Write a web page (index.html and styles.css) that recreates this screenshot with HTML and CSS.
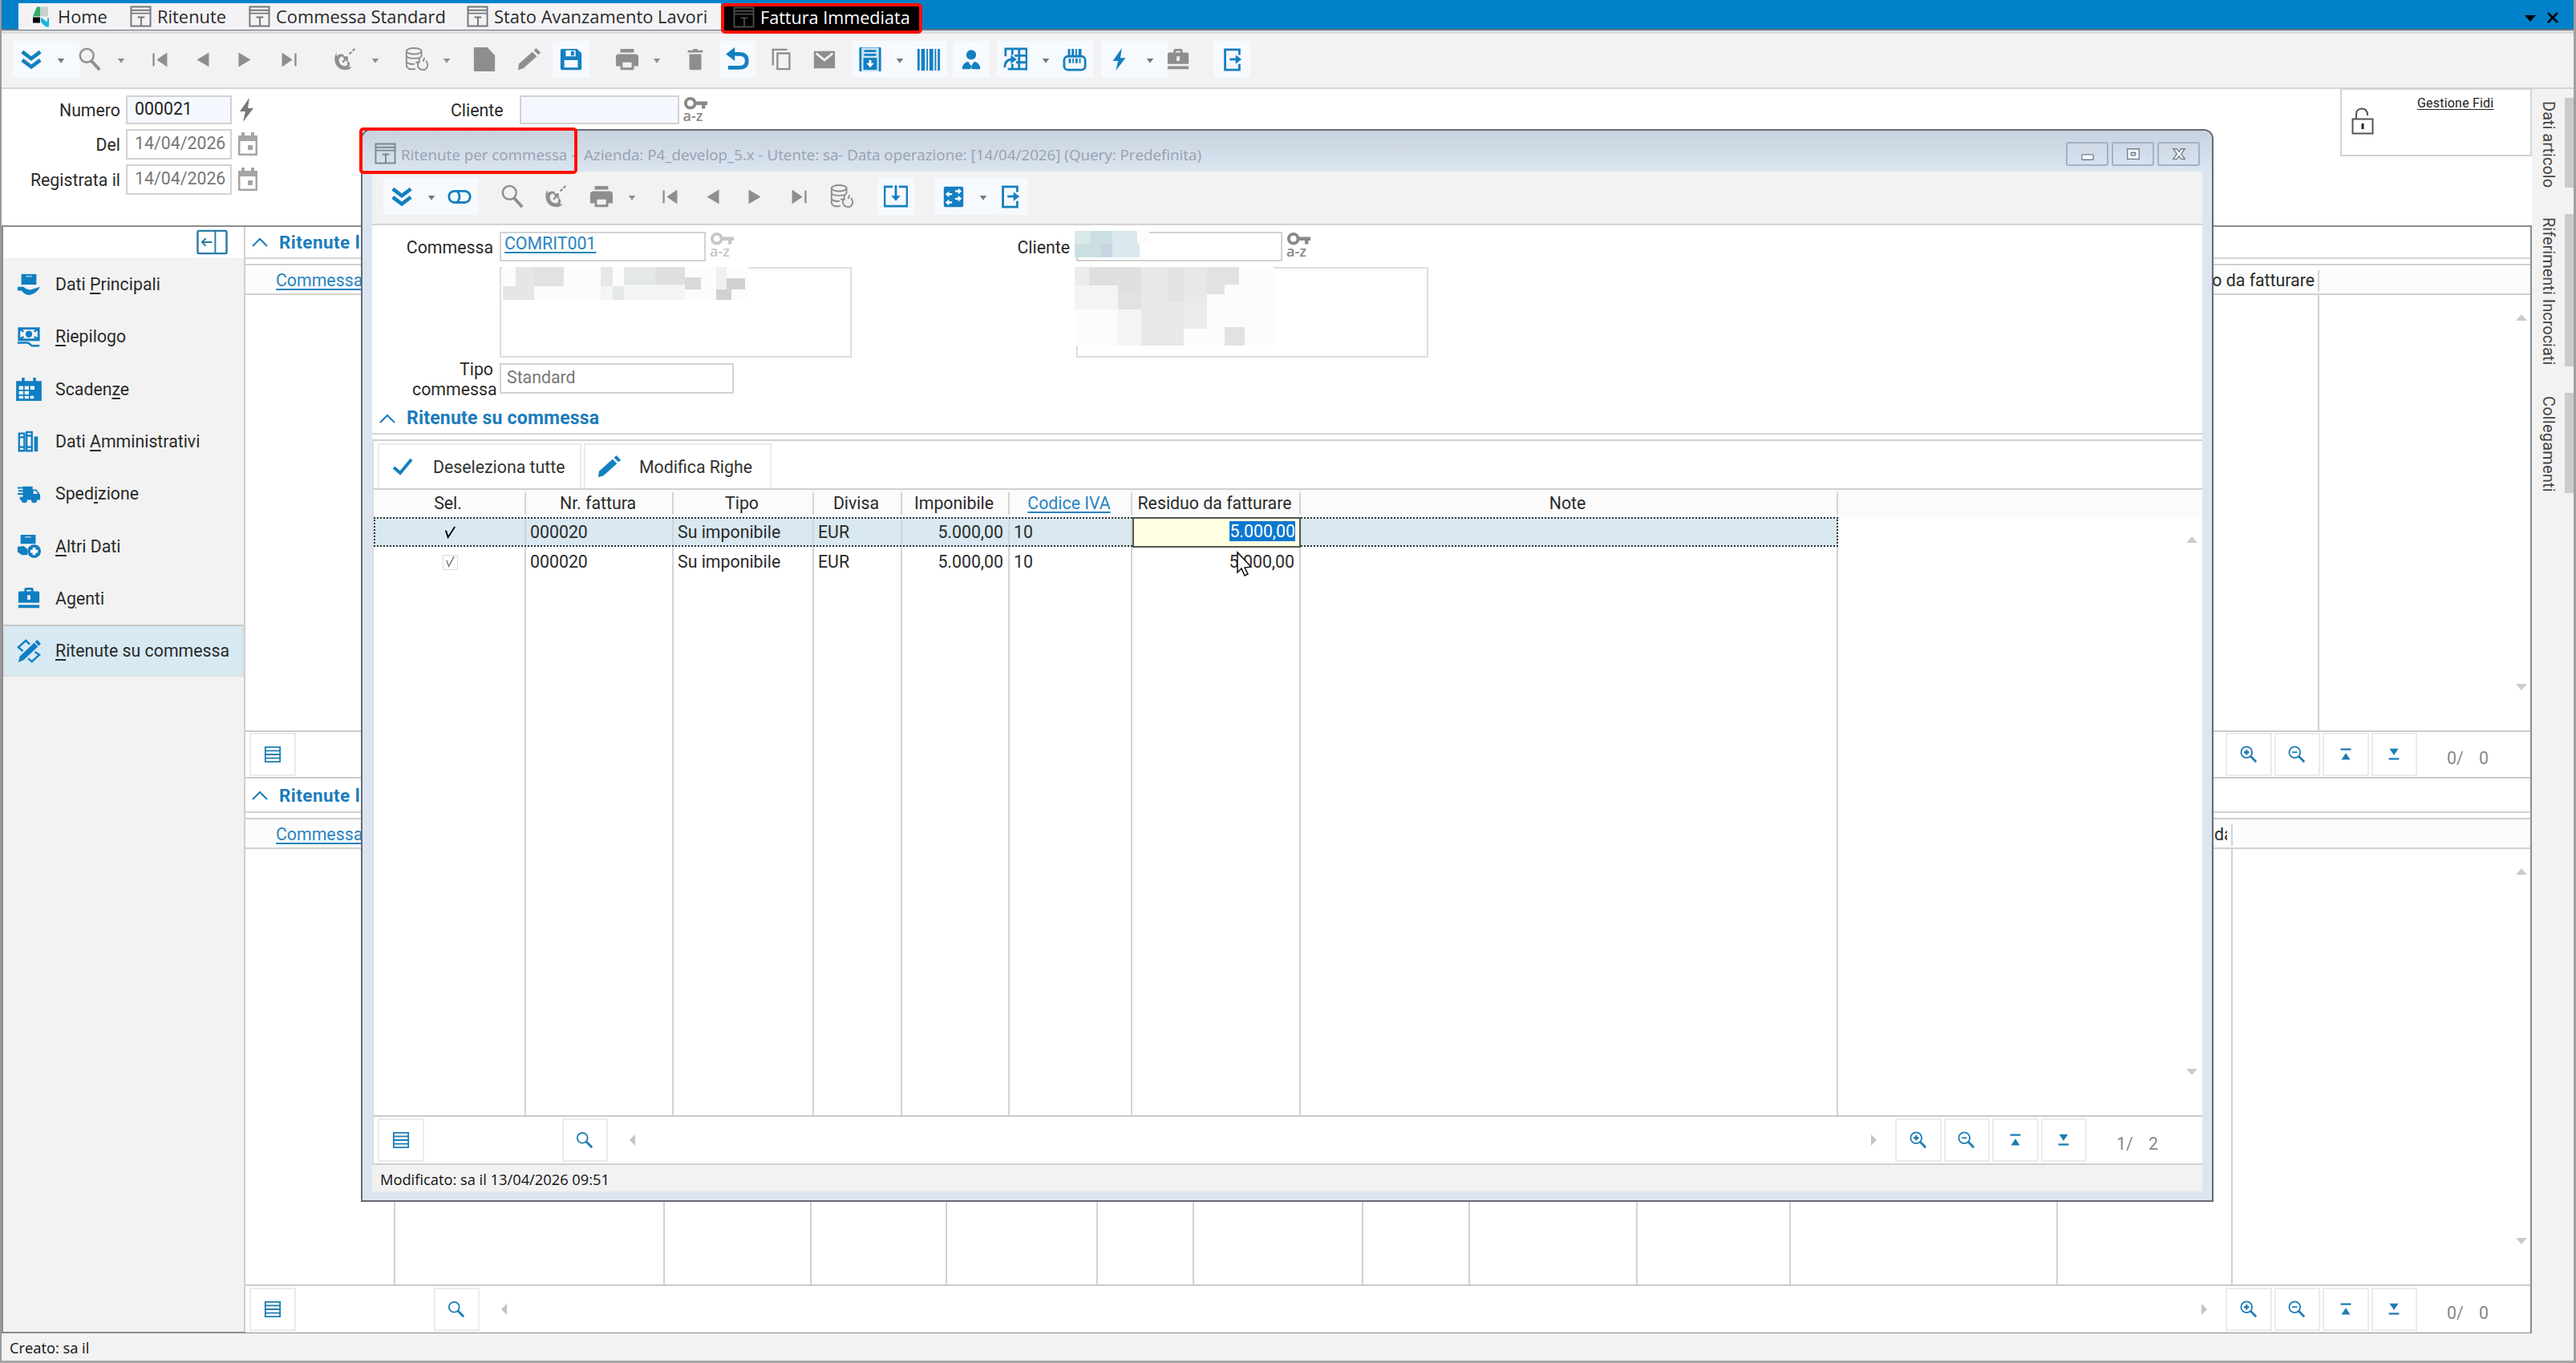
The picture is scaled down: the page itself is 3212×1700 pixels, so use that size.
FILE: index.html
```html
<!DOCTYPE html>
<html lang="it">
<head>
    <meta charset="UTF-8">
    <title>Fattura Immediata</title>
    <link rel="stylesheet" href="styles.css">
</head>
<body>
    <svg class="symbols">
        <symbol id="i-chevrons" viewBox="0 0 32 32"><path d="M4 6l12 9 12-9M4 17l12 9 12-9" fill="none" stroke="currentColor" stroke-width="5"/></symbol>
        <symbol id="i-caret" viewBox="0 0 32 32"><path d="M11.500 15h9l-4.500 6z" fill="currentColor"/></symbol>
        <symbol id="i-search" viewBox="0 0 32 32"><circle cx="12" cy="11" r="9" fill="none" stroke="currentColor" stroke-width="2.600"/><path d="M18 18l11 12" stroke="currentColor" stroke-width="4"/></symbol>
        <symbol id="i-first" viewBox="0 0 32 32"><path d="M7 8v17" stroke="currentColor" stroke-width="2.500"/><path d="M25 7v19L11 16.500z" fill="currentColor"/></symbol>
        <symbol id="i-prev" viewBox="0 0 32 32"><path d="M24 7v19L8 16.500z" fill="currentColor"/></symbol>
        <symbol id="i-next" viewBox="0 0 32 32"><path d="M8 7v19l16-9.500z" fill="currentColor"/></symbol>
        <symbol id="i-last" viewBox="0 0 32 32"><path d="M25 8v17" stroke="currentColor" stroke-width="2.500"/><path d="M7 7v19l14-9.500z" fill="currentColor"/></symbol>
        <symbol id="i-dish" viewBox="0 0 32 32"><path d="M5 7c-6 9-1 23 11 23 4 0 7-1 9-4l-4 0c2-2 2-5 0-8l-2 3c1 2 0 4-3 4-5 0-8-4-8-9 1-3 3-4 6-4l1-2c-4-2-8-1-10 2z" fill="currentColor"/><path d="M13 20l6-7" stroke="currentColor" stroke-width="2.500"/><path d="M12 12h8v8z" fill="currentColor"/><path d="M22 9l8-8" stroke="currentColor" stroke-width="2.500" stroke-dasharray="4 2"/></symbol>
        <symbol id="i-db" viewBox="0 0 32 32"><g fill="none" stroke="currentColor" stroke-width="2"><ellipse cx="13" cy="5" rx="10" ry="4"/><path d="M3 5v6c0 5 20 5 20 0V5M3 11v7c0 4 7 5 11 4M3 18v6c0 4 5 6 12 5M6 29h9"/><path d="M20 18c-5 8 1 12 5 12s9-5 4-12M20 14v6h-5M27 14l-2 5"/></g></symbol>
        <symbol id="i-file" viewBox="0 0 32 32"><path d="M2-1h17l11 12v19q0 3-3 3H5q-3 0-3-3z" fill="currentColor"/></symbol>
        <symbol id="i-pencil" viewBox="0 0 32 32"><path d="M1 30l1-8L20 6l6 6L8 28zM22 4l3-3 6 6-3 3z" fill="currentColor"/></symbol>
        <symbol id="i-save" viewBox="0 0 32 32"><path fill-rule="evenodd" d="M4 2h20l6 6v20q0 2-2 2H4q-2 0-2-2V4q0-2 2-2zM9 4v8h13V4zM7 17v10h18V17zM16 5h4v6h-4z" fill="currentColor"/></symbol>
        <symbol id="i-print" viewBox="0 0 32 32"><path fill-rule="evenodd" d="M7 2h18v5H7zM5 9h22q4 0 4 4v12h-6v5H7v-5H1V13q0-4 4-4zM10 20v7h12v-7z" fill="currentColor"/></symbol>
        <symbol id="i-trash" viewBox="0 0 32 32"><path d="M6 4h7V2h6v2h7v3H6zM8 9h16v19q0 2-2 2H10q-2 0-2-2z" fill="currentColor"/></symbol>
        <symbol id="i-undo" viewBox="0 0 32 32"><path d="M9 9h9q10 0 10 9t-10 9H3" fill="none" stroke="currentColor" stroke-width="5"/><path d="M0 9l12-9v18z" fill="currentColor"/></symbol>
        <symbol id="i-copy" viewBox="0 0 32 32"><path d="M4 24V3h19M10 8h16v21H10z" fill="none" stroke="currentColor" stroke-width="2.500"/></symbol>
        <symbol id="i-mail" viewBox="0 0 32 32"><path d="M2 5h28v23H2z" fill="currentColor"/><path d="M5 8l11 9 11-9" fill="none" stroke="#f2f2f2" stroke-width="3"/></symbol>
        <symbol id="i-doc" viewBox="0 0 32 32"><rect x="3" y="-1" width="26" height="35" rx="3" fill="#cfe4f3" stroke="currentColor" stroke-width="3"/><path d="M8 5h16M8 10h16" stroke="currentColor" stroke-width="3"/><path d="M7 14h18v16H7z" fill="currentColor"/><path d="M16 17v6" stroke="#fff" stroke-width="3"/><path d="M11 21h10l-5 6z" fill="#fff"/></symbol>
        <symbol id="i-barcode" viewBox="0 0 32 32"><path d="M1 2h3v29H1zM6 2h5v29H6zM13 2h2v29h-2zM17 2h5v29h-5zM24 2h2v29h-2zM28 2h3v29h-3z" fill="currentColor"/></symbol>
        <symbol id="i-person" viewBox="0 0 32 32"><circle cx="16" cy="10" r="6.500" fill="currentColor"/><path d="M4 29q0-8 8-10l4 6 4-6q8 2 8 10H17l-1-3-1 3z" fill="currentColor"/></symbol>
        <symbol id="i-grid" viewBox="0 0 32 32"><path d="M3 12V2h28v27H6M12 2v8M21 2v27M31 11H15M31 20H17M12 22v7" fill="none" stroke="currentColor" stroke-width="3"/><path d="M2 27q0-11 10-11" fill="none" stroke="currentColor" stroke-width="3"/><path d="M10 10l8 6-8 6z" fill="currentColor"/></symbol>
        <symbol id="i-box" viewBox="0 0 32 32"><rect x="2" y="12" width="28" height="18" rx="5" fill="none" stroke="currentColor" stroke-width="3"/><path d="M7 11V2h3v9zM12 11V2h3v9zM17 11V2h2v9zM21 11V2h4v9zM8 15h3v6H8zM13 15h2v6h-2zM17 15h3v6h-3zM22 15h2v6h-2z" fill="currentColor"/></symbol>
        <symbol id="i-bolt" viewBox="0 0 32 32"><path d="M19 1L7 18h7l-3 13 13-17h-7z" fill="currentColor"/></symbol>
        <symbol id="i-case" viewBox="0 0 32 32"><path fill-rule="evenodd" d="M10 7V4q0-2 2-2h8q2 0 2 2v3h6q2 0 2 2v13H2V9q0-2 2-2zM13 5v2h6V5zM2 25h28v4H2zM14 12v6h4v-6z" fill="currentColor"/></symbol>
        <symbol id="i-exit" viewBox="0 0 32 32"><path d="M26 10V3H7v27h19v-8" fill="none" stroke="currentColor" stroke-width="3"/><path d="M13 16h9" stroke="currentColor" stroke-width="3"/><path d="M21 10l8 6-8 6z" fill="currentColor"/></symbol>
        <symbol id="i-toggle" viewBox="0 0 32 32"><rect x="2" y="9" width="28" height="15" rx="7" fill="none" stroke="currentColor" stroke-width="3"/><path d="M13 9q6 7 0 15" fill="none" stroke="currentColor" stroke-width="3"/></symbol>
        <symbol id="i-import" viewBox="0 0 32 32"><path d="M12 3H1v26h30V3H20" fill="none" stroke="currentColor" stroke-width="3"/><path d="M16 1v16" stroke="currentColor" stroke-width="3"/><path d="M10 15h12l-6 7z" fill="currentColor"/></symbol>
        <symbol id="i-calc" viewBox="0 0 32 32"><rect x="3" y="3" width="26" height="27" rx="2" fill="currentColor"/><path d="M18 9h5M9 13h5M18 19h5M9 24h5" stroke="#fff" stroke-width="2.500"/><path d="M22 5l5 4-5 4zM10 9l-5 4 5 4zM22 15l5 4-5 4zM10 20l-5 4 5 4z" fill="#fff"/></symbol>
        <symbol id="i-form" viewBox="0 0 28 28"><path d="M1.500 1.500h25v25h-25zM1.500 6h25M1.500 10h25M10 15h9M14.500 15v11" fill="none" stroke="currentColor" stroke-width="2"/></symbol>
        <symbol id="i-key" viewBox="0 0 32 32"><circle cx="9" cy="9" r="6" fill="none" stroke="currentColor" stroke-width="4"/><path d="M15 9h16M26 10v6" stroke="currentColor" stroke-width="4.500"/></symbol>
        <symbol id="i-cal" viewBox="0 0 26 32"><path fill-rule="evenodd" d="M1 5h4V1h4v4h8V1h4v4h4v25H1zM3.500 12v15.500h19V12z" fill="currentColor"/><path d="M13 17h6v6h-6z" fill="currentColor"/></symbol>
        <symbol id="i-up" viewBox="0 0 20 12"><path d="M1 11l9-9 9 9" fill="none" stroke="currentColor" stroke-width="2"/></symbol>
        <symbol id="i-list" viewBox="0 0 24 24"><path d="M2 2h20v20H2zM2 7h20M2 12h20M2 17h20" fill="none" stroke="currentColor" stroke-width="2"/></symbol>
        <symbol id="i-lens" viewBox="0 0 24 24"><circle cx="9" cy="9" r="7" fill="none" stroke="currentColor" stroke-width="2"/><path d="M14 14l8 8" stroke="currentColor" stroke-width="3"/></symbol>
        <symbol id="i-zoomin" viewBox="0 0 24 24"><circle cx="9" cy="9" r="7.500" fill="none" stroke="currentColor" stroke-width="2"/><path d="M14 14l8 8" stroke="currentColor" stroke-width="3"/><path d="M9 5.500v7M5.500 9h7" stroke="currentColor" stroke-width="2.500"/></symbol>
        <symbol id="i-zoomout" viewBox="0 0 24 24"><circle cx="9" cy="9" r="7.500" fill="none" stroke="currentColor" stroke-width="2"/><path d="M14 14l8 8" stroke="currentColor" stroke-width="3"/><path d="M5.500 9h7" stroke="currentColor" stroke-width="2"/></symbol>
        <symbol id="i-top" viewBox="0 0 24 24"><path d="M5 5h14" stroke="currentColor" stroke-width="2.500"/><path d="M6 19h12l-6-9z" fill="currentColor"/></symbol>
        <symbol id="i-bottom" viewBox="0 0 24 24"><path d="M5 18h14" stroke="currentColor" stroke-width="2.500"/><path d="M6 4h12l-6 9z" fill="currentColor"/></symbol>
    </svg>

    <nav class="tabs">
        <div class="tab"><svg class="logo" viewBox="0 0 24 26"><path d="M2 13L7 1h4v12z" fill="#2fae6b"/><path d="M11 1h10v12H11z" fill="#c9cfcc"/><path d="M2 14h9v7H2z" fill="#000"/><path d="M12 14l8 6v-5h2v11h-4l-6-6z" fill="#16b4e0"/></svg>Home</div>
        <div class="tab"><svg><use href="#i-form"/></svg>Ritenute</div>
        <div class="tab"><svg><use href="#i-form"/></svg>Commessa Standard</div>
        <div class="tab"><svg><use href="#i-form"/></svg>Stato Avanzamento Lavori</div>
        <div class="tab active"><svg><use href="#i-form"/></svg>Fattura Immediata</div>
        <div class="tabs-end"><svg viewBox="0 0 14 10"><path d="M0 1h14L7 9z"/></svg><svg class="close" viewBox="0 0 14 14"><path d="M1 1l12 12M13 1L1 13" stroke="#000" stroke-width="2.500"/></svg></div>
    </nav>

    <div class="toolbar main-tools">
        <svg class="on"><use href="#i-chevrons"/></svg>
        <svg class="arrow on"><use href="#i-caret"/></svg>
        <svg><use href="#i-search"/></svg>
        <svg><use href="#i-caret"/></svg>
        <svg><use href="#i-first"/></svg>
        <svg><use href="#i-prev"/></svg>
        <svg><use href="#i-next"/></svg>
        <svg><use href="#i-last"/></svg>
        <svg><use href="#i-dish"/></svg>
        <svg><use href="#i-caret"/></svg>
        <svg><use href="#i-db"/></svg>
        <svg><use href="#i-caret"/></svg>
        <svg><use href="#i-file"/></svg>
        <svg><use href="#i-pencil"/></svg>
        <svg class="on"><use href="#i-save"/></svg>
        <svg><use href="#i-print"/></svg>
        <svg><use href="#i-caret"/></svg>
        <svg><use href="#i-trash"/></svg>
        <svg class="on"><use href="#i-undo"/></svg>
        <svg><use href="#i-copy"/></svg>
        <svg><use href="#i-mail"/></svg>
        <svg class="on"><use href="#i-doc"/></svg>
        <svg class="arrow on"><use href="#i-caret"/></svg>
        <svg class="on"><use href="#i-barcode"/></svg>
        <svg class="on"><use href="#i-person"/></svg>
        <svg class="on"><use href="#i-grid"/></svg>
        <svg class="arrow on"><use href="#i-caret"/></svg>
        <svg class="on"><use href="#i-box"/></svg>
        <svg class="on"><use href="#i-bolt"/></svg>
        <svg class="arrow on"><use href="#i-caret"/></svg>
        <svg><use href="#i-case"/></svg>
        <svg class="on"><use href="#i-exit"/></svg>
    </div>

    <div class="work">
        <main class="document">
            <section class="head">
                <div class="head-fields">
                    <label>Numero</label><div class="field dark">000021</div><svg class="bolt"><use href="#i-bolt"/></svg>
                    <label>Del</label><div class="field">14/04/2026</div><svg><use href="#i-cal"/></svg>
                    <label>Registrata il</label><div class="field">14/04/2026</div><svg><use href="#i-cal"/></svg>
                </div>
                <div class="head-client">
                    <label>Cliente</label><div class="field dark"></div>
                    <div class="key"><svg><use href="#i-key"/></svg><span>a-z</span></div>
                </div>
                <div class="fidi">
                    <svg viewBox="0 0 28 34"><path d="M1.500 14.500h25v18h-25zM6 14V8q0-6 7-6.500 6 0 7 6.500v2" fill="none" stroke="#555" stroke-width="2"/><path d="M14 20v7" stroke="#222" stroke-width="3"/></svg>
                    <a>Gestione Fidi</a>
                </div>
            </section>

            <div class="panels">
                <aside class="menu">
                    <div class="menu-top"><svg viewBox="0 0 40 32"><rect x="1.500" y="1.500" width="37" height="29" rx="2" fill="#fff" stroke="currentColor" stroke-width="2.500"/><path d="M24 2v28M7 16h13M12 11l-5 5 5 5" fill="none" stroke="currentColor" stroke-width="2"/></svg></div>
                    <div class="item"><svg viewBox="0 0 32 32"><path d="M6 2h20v14H6z" fill="currentColor"/><path d="M12 5h8" stroke="#8cc4e6" stroke-width="2"/><path d="M1 19h8q4 4 9 4l13-4q-4 7-9 9-7 4-13-1l-3-3H1z" fill="currentColor"/></svg><span>Dati <u>P</u>rincipali</span></div>
                    <div class="item"><svg viewBox="0 0 32 32"><path d="M3 5h26v15H3z" fill="none" stroke="currentColor" stroke-width="3"/><circle cx="16" cy="12.500" r="4.500" fill="currentColor"/><path d="M4 6l5 3M28 6l-5 3M4 19l5-3M28 19l-5-3M1 24h14l5 4h10" stroke="currentColor" stroke-width="2.500" fill="none"/></svg><span><u>R</u>iepilogo</span></div>
                    <div class="item"><svg class="wide" viewBox="0 0 36 34"><path fill-rule="evenodd" d="M0 6h8V1h4v5h12V1h4v5h8v28H0zM4 13v5h6v-5zM12 13v5h6v-5zM20 13v5h6v-5zM4 20v5h6v-5zM12 20v5h6v-5zM4 27v4h6v-4zM12 27v4h6v-4zM20 27v4h5v-4z" fill="currentColor"/></svg><span>Scaden<u>z</u>e</span></div>
                    <div class="item"><svg viewBox="0 0 32 32"><path d="M3 5h7v23H3zM13 3h7v25h-7zM3 10h7M13 8h7M3 23h7M13 23h7" fill="none" stroke="currentColor" stroke-width="2.500"/><path d="M23 9h5v20h-5z" fill="currentColor"/></svg><span>Dati <u>A</u>mministrativi</span></div>
                    <div class="item"><svg viewBox="0 0 32 32"><path d="M8 6h13v4h5l5 7v7h-4a4 4 0 01-8 0h-5a4 4 0 01-8 0H4v-4h4z" fill="currentColor"/><path d="M1 8h8M2 12h8M1 16h8" stroke="currentColor" stroke-width="2"/><path d="M22 12h3l3 4h-6z" fill="#f2f2f2"/></svg><span>Sped<u>i</u>zione</span></div>
                    <div class="item"><svg viewBox="0 0 32 32"><path d="M5 1h20v12H5zM1 17l8-1 5 4v8H7l-6-4z" fill="currentColor"/><path d="M11 4h8" stroke="#8cc4e6" stroke-width="2"/><circle cx="23" cy="23" r="9" fill="currentColor"/><path d="M23 18v10M18 23h10" stroke="#fff" stroke-width="4"/></svg><span><u>A</u>ltri Dati</span></div>
                    <div class="item"><svg><use href="#i-case"/></svg><span>A<u>g</u>enti</span></div>
                    <div class="item selected"><svg viewBox="0 0 32 32"><path d="M2 31l2-8L23 5l5 5L9 28z" fill="currentColor"/><path d="M24 4l3-3 5 5-3 3z" fill="currentColor"/><path d="M8 16l-6-5L12 2l5 5M24 17l6 4-10 9-5-4" fill="none" stroke="currentColor" stroke-width="2.500"/></svg><span><u>R</u>itenute su commessa</span></div>
                </aside>

                <div class="grids">
                    <section class="grid-box first">
                        <h2><svg><use href="#i-up"/></svg>Ritenute l</h2>
                        <div class="grid-head back-one">
                            <div><a>Commessa</a></div>
                            <div class="right">Residuo da fatturare</div>
                            <div></div>
                        </div>
                        <div class="grid-body back-one">
                            <div></div><div></div><div></div>
                            <i class="tri up"></i><i class="tri down"></i>
                        </div>
                        <footer class="grid-foot">
                            <span class="btn"><svg><use href="#i-list"/></svg></span>
                            <span class="btn push"><svg><use href="#i-zoomin"/></svg></span>
                            <span class="btn"><svg><use href="#i-zoomout"/></svg></span>
                            <span class="btn"><svg><use href="#i-top"/></svg></span>
                            <span class="btn"><svg><use href="#i-bottom"/></svg></span>
                            <span class="count"><b>0/</b><b>0</b></span>
                        </footer>
                    </section>
                    <section class="grid-box second">
                        <h2><svg><use href="#i-up"/></svg>Ritenute l</h2>
                        <div class="grid-head back-two">
                            <div><a>Commessa</a></div>
                            <div></div><div></div><div></div><div></div><div></div><div></div><div></div><div></div><div></div><div></div>
                            <div class="cut"><span>da</span></div>
                            <div></div>
                        </div>
                        <div class="grid-body back-two">
                            <div></div><div></div><div></div><div></div><div></div><div></div><div></div><div></div><div></div><div></div><div></div><div></div><div></div>
                            <i class="tri up"></i><i class="tri down"></i>
                        </div>
                        <footer class="grid-foot">
                            <span class="btn"><svg><use href="#i-list"/></svg></span>
                            <span class="btn find"><svg><use href="#i-lens"/></svg></span>
                            <i class="tri left"></i>
                            <i class="tri rightward"></i>
                            <span class="btn"><svg><use href="#i-zoomin"/></svg></span>
                            <span class="btn"><svg><use href="#i-zoomout"/></svg></span>
                            <span class="btn"><svg><use href="#i-top"/></svg></span>
                            <span class="btn"><svg><use href="#i-bottom"/></svg></span>
                            <span class="count"><b>0/</b><b>0</b></span>
                        </footer>
                    </section>
                </div>
            </div>
        </main>
        <div class="side-tabs">
            <span class="t1">Dati articolo</span>
            <span class="t2">Riferimenti Incrociati</span>
            <span class="t3">Collegamenti</span>
        </div>
    </div>
    <div class="status">Creato: sa il</div>

    <!-- finestra Ritenute per commessa -->
    <div class="dialog">
        <header class="dialog-title">
            <svg><use href="#i-form"/></svg>
            <span>Ritenute per commessa -&nbsp; Azienda: P4_develop_5.x - Utente: sa- Data operazione: [14/04/2026] (Query: Predefinita)</span>
            <div class="win-btns">
                <b><svg viewBox="0 0 20 20"><rect x="2" y="11" width="16" height="7" rx="1" fill="#fff" stroke="#6d7b8c" stroke-width="1.500"/></svg></b>
                <b><svg viewBox="0 0 20 20"><path fill-rule="evenodd" d="M2 3h16v14H2zM7 8v4h6V8z" fill="#fff" stroke="#6d7b8c" stroke-width="1.500"/></svg></b>
                <b><svg viewBox="0 0 20 20"><path d="M2 3h5l3 4 3-4h5l-5 7 5 7h-5l-3-4-3 4H2l5-7z" fill="#fff" stroke="#6d7b8c" stroke-width="1.500"/></svg></b>
            </div>
        </header>
        <div class="dialog-content">
            <div class="toolbar dialog-tools">
                <svg class="on"><use href="#i-chevrons"/></svg>
                <svg class="arrow on"><use href="#i-caret"/></svg>
                <svg class="on"><use href="#i-toggle"/></svg>
                <svg><use href="#i-search"/></svg>
                <svg><use href="#i-dish"/></svg>
                <svg><use href="#i-print"/></svg>
                <svg><use href="#i-caret"/></svg>
                <svg><use href="#i-first"/></svg>
                <svg><use href="#i-prev"/></svg>
                <svg><use href="#i-next"/></svg>
                <svg><use href="#i-last"/></svg>
                <svg><use href="#i-db"/></svg>
                <svg class="on"><use href="#i-import"/></svg>
                <svg class="on"><use href="#i-calc"/></svg>
                <svg class="arrow on"><use href="#i-caret"/></svg>
                <svg class="on"><use href="#i-exit"/></svg>
            </div>
            <div class="dialog-form">
                <div class="form-col">
                    <label>Commessa</label>
                    <div class="line"><div class="field code"><a>COMRIT001</a></div><div class="key off"><svg><use href="#i-key"/></svg><span>a-z</span></div></div>
                    <div class="area wide-area">
                        <svg class="mosaic" viewBox="0 0 306 44" shape-rendering="crispEdges">
                            <path d="M0 0h306v41H0z" fill="#fcfcfc"/>
                            <path d="M16 0h23v24H16zM0 24h39v17H0z" fill="#e6e6e4"/><path d="M39 0h37v24H39z" fill="#e2e2e1"/>
                            <path d="M122 0h15v24h-15z" fill="#e6e7e8"/><path d="M137 24h14v17h-14zM151 0h39v22h-39z" fill="#e5e8e8"/>
                            <path d="M151 22h76v19h-76zM122 24h15v17h-15z" fill="#f4f5f5"/><path d="M190 0h37v22h-37z" fill="#dfdfdf"/>
                            <path d="M227 13h20v15h-20z" fill="#d9d9da"/><path d="M266 0h13v28h-13z" fill="#f0f0f0"/><path d="M279 14h23v14h-23zM266 28h19v13h-19z" fill="#d1d1d1"/>
                        </svg>
                    </div>
                    <label class="two">Tipo commessa</label>
                    <div class="field type">Standard</div>
                </div>
                <div class="form-col client">
                    <label>Cliente</label>
                    <div class="line"><div class="field code">
                        <svg class="mosaic code-mosaic" viewBox="0 0 92 33" shape-rendering="crispEdges">
                            <path d="M0 0h20v16H0z" fill="#dae9e8"/><path d="M20 0h27v16H20zM0 16h33v17H0z" fill="#cbdfe3"/><path d="M33 16h14v17H33z" fill="#c6d5e4"/><path d="M47 0h31v16h3v17H47z" fill="#dbe8ee"/><path d="M78 0h15v16H78z" fill="#fcfcfc"/>
                        </svg>
                    </div><div class="key"><svg><use href="#i-key"/></svg><span>a-z</span></div></div>
                    <div class="area wide-area">
                        <svg class="mosaic client-mosaic" viewBox="0 0 248 98" shape-rendering="crispEdges">
                            <path d="M0 0h248v98H0z" fill="#fcfcfc"/>
                            <path d="M0 0h18v23H0zM136 45h29v32h-29z" fill="#ececed"/><path d="M0 23h54v30H0zM54 53h29v45H54z" fill="#f4f4f4"/>
                            <path d="M18 0h65v30H54v-7H18z" fill="#e0dee1"/><path d="M54 30h29v23H54z" fill="#e1e3e0"/>
                            <path d="M83 0h33v22h20V0h29v45h-29v53H83z" fill="#e7e9e8"/><path d="M116 0h20v44h-20z" fill="#e4e3e4"/>
                            <path d="M165 0h40v22h-18v12h-22zM187 75h25v23h-25z" fill="#e2e2e2"/>
                        </svg>
                    </div>
                </div>
            </div>
            <h2><svg><use href="#i-up"/></svg>Ritenute su commessa</h2>
            <section class="rows-box">
                <div class="actions">
                    <button class="deselect"><svg viewBox="0 0 26 22"><path d="M2 12l8 7L24 2" fill="none" stroke="currentColor" stroke-width="4"/></svg>Deseleziona tutte</button>
                    <button class="edit"><svg viewBox="0 0 32 32"><use href="#i-pencil"/></svg>Modifica Righe</button>
                </div>
                <div class="rows head-row">
                    <div>Sel.</div><div>Nr. fattura</div><div>Tipo</div><div>Divisa</div><div>Imponibile</div><div><a>Codice IVA</a></div><div>Residuo da fatturare</div><div>Note</div>
                </div>
                <div class="rows-area">
                    <div class="rows data current">
                        <div class="check"><svg viewBox="0 0 18 18"><path d="M3 6l3 9L15 1" fill="none" stroke="#000" stroke-width="2"/></svg></div><div>000020</div><div>Su imponibile</div><div>EUR</div><div class="num">5.000,00</div><div>10</div><div class="num editing"><mark>5.000,00</mark></div><div></div>
                    </div>
                    <div class="rows data">
                        <div class="check"><svg class="boxed" viewBox="0 0 18 18"><path d="M4 6l3 8L14 1" fill="none" stroke="#777" stroke-width="1.500"/></svg></div><div>000020</div><div>Su imponibile</div><div>EUR</div><div class="num">5.000,00</div><div>10</div><div class="num">5.000,00</div><div></div>
                    </div>
                    <div class="rows blank"><div></div><div></div><div></div><div></div><div></div><div></div><div></div><div></div></div>
                    <i class="tri up"></i><i class="tri down"></i>
                    <svg class="pointer" viewBox="0 0 20 32"><path d="M1 1v25l5-5 4 9 4-2-4-8 8-1z" fill="#fff" stroke="#111" stroke-width="1.500"/></svg>
                </div>
                <footer class="grid-foot">
                    <span class="btn"><svg><use href="#i-list"/></svg></span>
                    <span class="btn find"><svg><use href="#i-lens"/></svg></span>
                    <i class="tri left"></i>
                    <i class="tri rightward"></i>
                    <span class="btn"><svg><use href="#i-zoomin"/></svg></span>
                    <span class="btn"><svg><use href="#i-zoomout"/></svg></span>
                    <span class="btn"><svg><use href="#i-top"/></svg></span>
                    <span class="btn"><svg><use href="#i-bottom"/></svg></span>
                    <span class="count"><b>1/</b><b>2</b></span>
                </footer>
            </section>
            <div class="dialog-status">Modificato: sa il 13/04/2026 09:51</div>
        </div>
        <div class="highlight"></div>
    </div>
</body>
</html>
```
FILE: styles.css
```css
* {
    box-sizing: border-box;
}
body {
    margin: 0;
    width: 3212px;
    height: 1700px;
    overflow: hidden;
    position: relative;
    display: flex;
    flex-direction: column;
    background: #f2f2f2;
    border-left: 2px solid #9a9a9a;
    border-right: 3px solid #a0a0a0;
    border-bottom: 3px solid #a6a6a6;
    color: #2a2a2a;
    font-family: Roboto, 'Liberation Sans', sans-serif;
    font-size: 21.3px;
}
.symbols {
    position: absolute;
    width: 0;
    height: 0;
}
svg {
    display: block;
    flex: none;
    overflow: visible;
}
a {
    color: #2a84c0;
    text-decoration: underline;
    text-underline-offset: 3px;
}

/* schede */
.tabs {
    height: 42px;
    flex: none;
    padding: 4px 19px 0 21px;
    display: grid;
    grid-template-columns: 139px 148px 272px 317px 251px 1fr;
    background: #0081c9;
    border-bottom: 4px solid #dcdcdf;
    box-shadow: inset 0 -2px #6b7680;
    font-family: 'Open Sans', 'Noto Sans', sans-serif;
    font-size: 21.9px;
}
.tab {
    height: 33px;
    display: flex;
    align-items: center;
    gap: 7px;
    background: #f3f3f5;
    white-space: nowrap;
}
.tab:first-child {
    padding-left: 16px;
    gap: 9px;
}
.tab svg {
    width: 27px;
    height: 27px;
    color: #777;
}
.tab .logo {
    width: 24px;
}
.tab.active {
    height: 38px;
    padding: 0 0 3px 11px;
    position: relative;
    background: #000;
    color: #fff;
    border: 4px solid #ff1000;
    border-radius: 5px;
    font-size: 21.6px;
}
.tab.active svg {
    color: #4a4a4a;
}
.tabs-end {
    display: flex;
    justify-content: flex-end;
    align-items: center;
    gap: 14px;
}
.tabs-end svg {
    width: 14px;
    height: 10px;
}
.tabs-end .close {
    height: 14px;
    margin-top: -2px;
}

/* barre strumenti */
.toolbar {
    flex: none;
    display: grid;
    align-items: center;
    color: #8e8e8e;
    background: #f2f2f2;
    border-bottom: 2px solid #d4d4d4;
}
.toolbar svg {
    width: 30px;
    height: 30px;
}
.toolbar .on {
    color: #1480c0;
    background: #f6f9fe;
    box-shadow: 0 0 0 8px #f6f9fe;
}
.toolbar .arrow {
    color: #777;
}
.main-tools {
    height: 69px;
    padding-left: 22px;
    padding-bottom: 3px;
    grid-template-columns: 37px 36px 39px 49px 53px 52px 55px 70px 38px 51px 38px 47px 56px 52px 70px 37px 48px 53px 55px 53px 57px 37px 36px 53px 55px 38px 36px 56px 38px 35px 67px 32px;
}
.dialog-tools {
    height: 67px;
    padding-left: 22px;
    padding-bottom: 4px;
    grid-template-columns: 37px 35px 66px 54px 57px 38px 48px 53px 52px 55px 53px 68px 72px 37px 33px 32px;
}

.work {
    height: 1552px;
    flex: none;
    display: flex;
}
.document {
    flex: 1;
    background: #fff;
}
.side-tabs {
    width: 52px;
    padding-top: 11px;
    display: flex;
    flex-direction: column;
    background: #f2f2f2;
}
.side-tabs span {
    writing-mode: vertical-rl;
    width: 52px;
    padding-right: 5px;
    padding-top: 4px;
    line-height: 30px;
    font-size: 20px;
    color: #444;
    border-right: 11px solid #cbcbcb;
    margin-bottom: 33px;
    white-space: nowrap;
}
.side-tabs .t1 {
    height: 112px;
}
.side-tabs .t2 {
    height: 190px;
}
.side-tabs .t3 {
    height: 125px;
    letter-spacing: 0.200px;
}

/* testata documento */
.head {
    height: 170px;
    display: flex;
    padding-top: 8px;
}
.head-fields {
    width: 322px;
    display: grid;
    grid-template-columns: 148px 132px 26px;
    grid-auto-rows: 36px 38px 38px;
    row-gap: 6px;
    column-gap: 7px;
    align-items: center;
    align-content: start;
}
.head-fields label {
    text-align: right;
}
.head-fields svg {
    width: 26px;
    height: 32px;
    color: #a5a5a5;
}
.head-fields .bolt {
    width: 32px;
    margin-left: -4px;
    color: #777;
}
.field {
    height: 100%;
    display: flex;
    align-items: center;
    padding: 0 0 3px 9px;
    background: #fff;
    border: 2px solid #d2d2d2;
    color: #777;
    position: relative;
}
.field.dark {
    background: #f5f8fe;
    color: #222;
}
.head-client {
    height: 36px;
    margin-left: 238px;
    display: flex;
    align-items: center;
}
.head-client .field {
    width: 199px;
    margin: 0 5px 0 20px;
}
.key {
    width: 31px;
    height: 34px;
    color: #888;
    font: 600 18px/12px 'Open Sans', sans-serif;
}
.key svg {
    width: 31px;
    height: 31px;
    margin-bottom: -13px;
}
.key.off {
    color: #c6c6c6;
}
.fidi {
    width: 239px;
    height: 85px;
    margin: -9px 0 0 auto;
    display: flex;
    border: 2px solid #d4d4d4;
    background: #fff;
}
.fidi svg {
    width: 28px;
    height: 34px;
    margin: 22px 54px 0 12px;
}
.fidi a {
    margin-top: 7px;
    font-size: 16px;
    letter-spacing: 0.200px;
    color: #222;
    text-underline-offset: 2px;
}

/* menu laterale */
.panels {
    height: 1382px;
    display: flex;
    border: 2px solid #8c8c8c;
}
.menu {
    width: 302px;
    background: #f2f2f2;
    border-right: 2px solid #cfcfcf;
}
.menu-top {
    height: 39px;
    padding: 3px 20px 0 0;
    display: flex;
    justify-content: flex-end;
    background: #fff;
}
.menu-top svg {
    width: 39px;
    height: 32px;
    color: #2a7ba8;
}
.item {
    height: 65.300px;
    padding-left: 17px;
    display: flex;
    align-items: center;
}
.item svg {
    width: 30px;
    height: 30px;
    margin-right: 18px;
    color: #0f7ec2;
}
.item .wide {
    width: 36px;
    margin: 0 15px 0 -3px;
}
.item.selected {
    background: #d7e9f3;
    border: 2px solid #dfdfe2;
    border-top-color: #c8c8c8;
    padding-left: 15px;
}
u {
    text-underline-offset: 3px;
}

/* griglie sotto la finestra */
.grids {
    flex: 1;
    min-width: 0;
}
h2 {
    margin: 0;
    height: 40px;
    display: flex;
    align-items: center;
    gap: 14px;
    padding-left: 8px;
    font-size: 22.500px;
    font-weight: 700;
    letter-spacing: 0.450px;
    color: #1b7cbc;
    border-bottom: 2px solid #d4d4d4;
}
h2 svg {
    width: 20px;
    height: 12px;
}
.grid-box {
    position: relative;
}
.second h2 {
    height: 43px;
}
.grid-head, .grid-body {
    display: grid;
}
.grid-head {
    height: 39px;
    margin-top: 6px;
    background: #fcfcfc;
    border-top: 2px solid #d0d0d0;
    border-bottom: 2px solid #d0d0d0;
}
.grid-head div {
    display: flex;
    align-items: center;
    margin: 6px 0 4px;
    padding-bottom: 2px;
    border-right: 2px solid #d4d4d4;
    white-space: nowrap;
}
.grid-head a {
    margin-left: 38px;
}
.grid-head .right {
    justify-content: flex-end;
    padding-right: 4px;
}
.grid-head .cut {
    justify-content: flex-end;
    padding-right: 5px;
}
.cut span {
    width: 16px;
    overflow: hidden;
}
.grid-body {
    height: 543px;
    position: relative;
}
.grid-body div {
    border-right: 2px solid #d2d2d2;
}
.grid-head div:last-of-type, .grid-body div:last-of-type {
    border-right: none;
}
.back-one {
    grid-template-columns: 187px 2399px 1fr;
}
.back-two {
    grid-template-columns: 187px 336px 183px 169px 188px 120px 211px 133px 209px 191px 333px 218px 1fr;
}
.grid-foot {
    height: 60px;
    display: flex;
    align-items: center;
    gap: 3px;
    padding: 0 0 0 5px;
    border-top: 2px solid #cacaca;
    background: #fff;
}
.first .grid-foot {
    border-bottom: 2px solid #cacaca;
}
.btn {
    width: 57.500px;
    height: 54px;
    display: flex;
    align-items: center;
    justify-content: center;
    border: 2px solid #ebebeb;
    color: #1d7cb4;
}
.btn svg {
    width: 22px;
    height: 22px;
}
.btn.push {
    margin-left: auto;
}
.btn.find {
    margin-left: 169px;
}
.count {
    width: 138px;
    padding: 8px 0 0 34px;
    display: flex;
    color: #888;
}
.count b {
    width: 40px;
    font-weight: 400;
}
.tri {
    width: 0;
    height: 0;
    border: 7px solid transparent;
}
.tri.up, .tri.down {
    position: absolute;
    right: 4px;
}
.tri.up {
    top: 24px;
    border-top: none;
    border-bottom: 8px solid #cbcbcb;
}
.tri.down {
    bottom: 50px;
    border-bottom: none;
    border-top: 8px solid #cbcbcb;
}
.tri.left {
    margin-left: 24px;
    border-left: none;
    border-right: 7px solid #c4c4c4;
}
.tri.rightward {
    margin: 0 20px 0 auto;
    border-right: none;
    border-left: 7px solid #c4c4c4;
}
.status, .dialog-status {
    font-family: 'Open Sans', 'Noto Sans', sans-serif;
    font-size: 18.300px;
    color: #111;
}
.status {
    padding-left: 10px;
    line-height: 36px;
}

/* finestra */
.dialog {
    position: absolute;
    left: 448px;
    top: 161px;
    width: 2310px;
    height: 1338px;
    padding: 0 12px;
    border: 2px solid #666b76;
    border-radius: 12px 12px 0 0;
    background: #dde4f1;
}
.dialog-title {
    height: 51px;
    margin: 0 -12px;
    padding: 12px 15px 0 13px;
    display: flex;
    align-items: flex-start;
    border-radius: 10px 10px 0 0;
    background: linear-gradient(#c9d2df, #dbe5f1);
    color: #97a1af;
    font-family: 'Open Sans', 'Noto Sans', sans-serif;
    font-size: 18.800px;
}
.dialog-title > svg {
    width: 27px;
    height: 27px;
    margin: 3px 6px 0 2px;
    color: #7c8794;
}
.dialog-title span {
    margin-top: 5px;
    white-space: nowrap;
}
.win-btns {
    margin: 2px 0 0 auto;
    display: flex;
    gap: 4px;
}
.win-btns b {
    width: 53px;
    height: 30px;
    display: flex;
    align-items: center;
    justify-content: center;
    border: 2px solid #a3b1c2;
    border-radius: 3px;
}
.win-btns svg {
    width: 18px;
    height: 18px;
}
.dialog-content {
    height: 1272px;
    background: #fff;
}
.dialog-form {
    height: 222px;
    display: flex;
}
.form-col {
    display: grid;
    width: 719px;
    grid-template-columns: 151px 439px;
    grid-template-rows: 37px 113px 38px;
    row-gap: 7px;
    column-gap: 8px;
    padding-top: 8px;
    align-content: start;
}
.form-col label {
    text-align: right;
    line-height: 25px;
    padding-top: 7px;
}
.form-col .two {
    padding: 0 0 0 50px;
    margin-top: -5px;
}
.client {
    width: 720px;
}
.line {
    display: flex;
    gap: 5px;
}
.field.code {
    width: 257px;
    padding: 0 0 8px 4px;
}
.wide-area {
    grid-column: 2;
    border: 2px solid #dedede;
    position: relative;
}
.mosaic {
    position: absolute;
    left: 2px;
    top: -2px;
    width: 306px;
    height: 44px;
}
.code-mosaic {
    left: -4px;
    top: -3px;
    width: 92px;
    height: 33px;
}
.client-mosaic {
    left: -4px;
    top: -2px;
    width: 248px;
    height: 98px;
}
.field.type {
    width: 292px;
    padding-left: 7px;
}
.dialog-content h2 {
    height: 39px;
    padding-left: 9px;
    font-size: 23px;
    letter-spacing: 0.200px;
}
.rows-box {
    margin-top: 6px;
    border-top: 2px solid #d0d0d0;
    border-left: 2px solid #dcdcdc;
}
.actions {
    height: 59px;
    padding: 3px 0 0 5px;
    display: flex;
    gap: 3px;
}
button {
    height: 56px;
    display: flex;
    align-items: center;
    padding: 0;
    background: #fff;
    border: 2px solid #ebebeb;
    border-bottom: none;
    font: inherit;
    color: #333;
}
button svg {
    color: #1480c0;
}
.deselect {
    width: 254px;
    padding-left: 16px;
}
.deselect svg {
    width: 26px;
    height: 22px;
    margin-right: 25px;
}
.edit {
    width: 234px;
    padding-left: 15px;
}
.edit svg {
    width: 30px;
    height: 30px;
    margin-right: 22px;
}
.rows {
    display: grid;
    width: 1826px;
    grid-template-columns: 190px 184px 175px 110px 134px 153px 210px 670px;
}
.rows div {
    border-right: 2px solid #d2d4d8;
    white-space: nowrap;
}
.head-row {
    width: auto;
    height: 36px;
    padding: 3px 0;
    background: #fbfbfb;
    border-top: 2px solid #d0d0d0;
    line-height: 28px;
    text-align: center;
}
.head-row div {
    padding-right: 3px;
}
.rows-area {
    height: 746px;
    position: relative;
    display: flex;
    flex-direction: column;
}
.data {
    height: 36px;
    flex: none;
    line-height: 38px;
}
.data div {
    padding-left: 5px;
}
.current {
    height: 37px;
    background: #d9e8f1;
    outline: 2px dotted #333;
    outline-offset: -2px;
}
.data .num {
    text-align: right;
    padding: 0 6px 0 0;
}
.data .editing {
    background: #ffffe1;
    border: 2px solid #555;
    line-height: 31px;
    padding: 0 5px 0 0;
    position: relative;
}
mark {
    background: #0b78d0;
    color: #fff;
}
.check {
    display: flex;
    align-items: center;
    justify-content: center;
}
.check svg {
    width: 17px;
    height: 17px;
    margin-right: 3px;
}
.check .boxed {
    outline: 1px solid #ddd;
}
.blank {
    flex: 1;
}
.rows-area .up {
    right: 6px;
}
.rows-area .down {
    right: 6px;
}
.pointer {
    position: absolute;
    left: 1076px;
    top: 43px;
    width: 20px;
    height: 32px;
}
.rows-box .count {
    width: 141px;
}
.dialog-status {
    height: 35px;
    padding-left: 10px;
    line-height: 36px;
    background: #f2f2f2;
    border-top: 2px solid #d0d0d0;
}
.highlight {
    position: absolute;
    left: -4px;
    top: -4px;
    width: 272px;
    height: 58px;
    border: 4px solid #ff1000;
    border-radius: 5px;
}
```
